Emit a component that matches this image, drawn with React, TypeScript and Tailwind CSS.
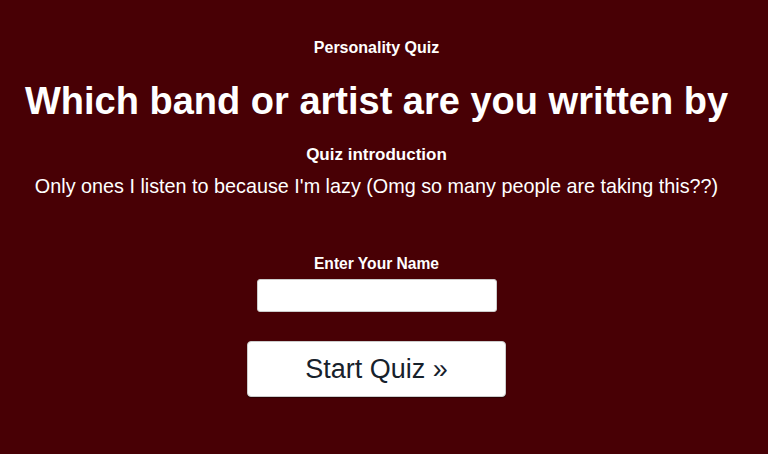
import React from "react";

export default function App() {
  return (
    <div
      className="w-full min-h-[454px] bg-[#480005] text-white flex flex-col items-center pr-[15px]"
      style={{ fontFamily: '"Liberation Sans", Arial, sans-serif' }}
    >
      <div className="pt-[39px] text-[16px] font-bold leading-[18px]">Personality Quiz</div>
      <h1 className="mt-[22px] text-[38px] font-bold leading-[44px] whitespace-nowrap">Which band or artist are you written by</h1>
      <div className="mt-[22px] text-[17px] font-bold leading-[20px]">Quiz introduction</div>
      <p className="mt-[9px] text-[19.8px] leading-[24px] whitespace-nowrap">
        Only ones I listen to because I'm lazy (Omg so many people are taking this??)
      </p>
      <div className="mt-[57px] text-[15.6px] font-bold leading-[18px]">Enter Your Name</div>
      <input
        type="text"
        className="mt-[6px] w-[240px] h-[33px] bg-white rounded-[3px] border border-[#ccc] outline-none text-black px-2"
      />
      <button className="mt-[29px] w-[259px] h-[56px] bg-white rounded-[4px] border border-[#ccc] shadow-[0_1px_1px_rgba(0,0,0,0.4)] text-[#17212b] text-[27px] leading-none">
        Start Quiz »
      </button>
    </div>
  );
}
